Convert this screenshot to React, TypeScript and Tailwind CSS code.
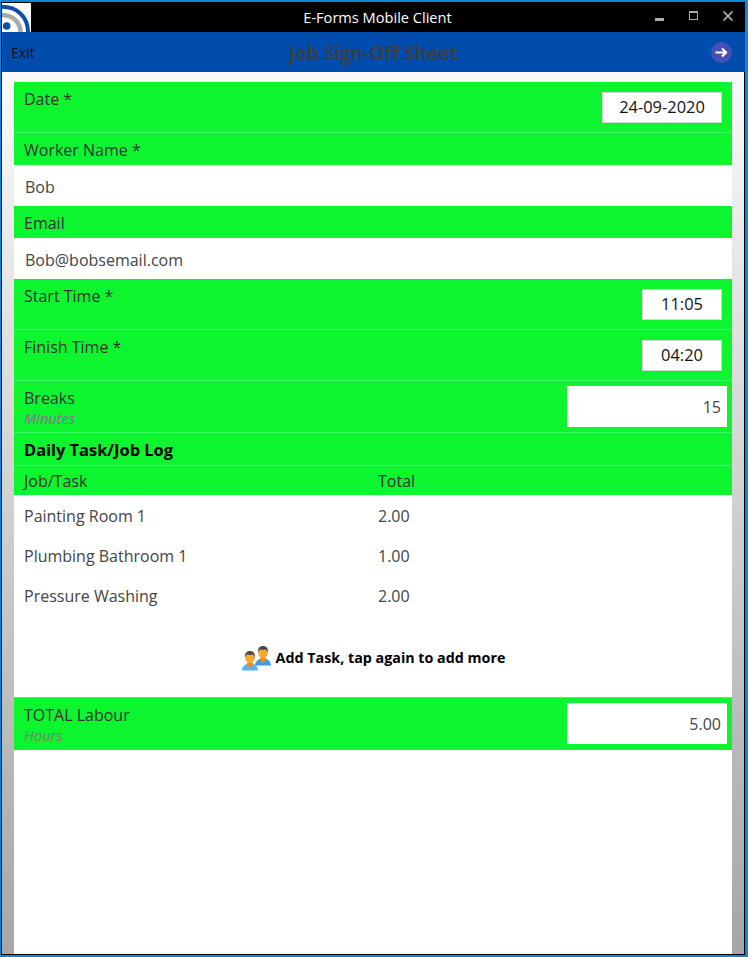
import { ReactNode } from "react";

const font = "font-['Open_Sans','Noto_Sans',sans-serif]";

function Divider() {
  return <div className="h-px bg-[#3ef766]" />;
}

function TimeRow({ label, value, boxWidth }: { label: string; value: string; boxWidth: string }) {
  return (
    <div className="flex h-[50px] justify-between bg-[#0cf52f] px-[10px]">
      <span className="pt-[5px] text-[16px] leading-[24px] text-[#333]">{label}</span>
      <div
        className={`mt-[10px] flex h-[31px] items-center justify-center border border-[#d5d5d5] bg-white text-[16.4px] text-[#111] ${boxWidth}`}
      >
        {value}
      </div>
    </div>
  );
}

function LabelRow({ children }: { children: ReactNode }) {
  return (
    <div className="flex h-[32px] items-center bg-[#0cf52f] pl-[10px] pt-[2px] text-[16px] text-[#333]">{children}</div>
  );
}

function InputRow({ value }: { value: string }) {
  return <div className="flex h-[41px] items-center bg-white pl-[11px] pt-[2px] text-[16px] text-[#444]">{value}</div>;
}

function NumberRow({
  label,
  hint,
  value,
  hintColor,
  height,
}: {
  label: string;
  hint: string;
  value: string;
  hintColor: string;
  height: string;
}) {
  return (
    <div className={`flex justify-between bg-[#0cf52f] pl-[10px] pr-[5px] ${height}`}>
      <div className="flex flex-col pt-[5px]">
        <span className="text-[16px] leading-[24px] text-[#333]">{label}</span>
        <span className={`text-[14.6px] italic leading-[16px] ${hintColor}`}>{hint}</span>
      </div>
      <div className="mt-[5px] flex h-[41px] w-[160px] items-center justify-end bg-white pr-[6px] text-[16px] text-[#444]">
        {value}
      </div>
    </div>
  );
}

function TaskRow({ name, total }: { name: string; total: string }) {
  return (
    <div className="flex h-[40px] items-center pl-[10px] pt-[2px] text-[16px] text-[#444]">
      <span className="w-[354px]">{name}</span>
      <span>{total}</span>
    </div>
  );
}

function Person({ x, y, body }: { x: number; y: number; body: string }) {
  return (
    <g transform={`translate(${x} ${y})`}>
      <path d="M0 19.500c0-3.500 2.500-6 6-7h4c3.500 1 6 3.500 6 7z" fill={body} />
      <path d="M4.500 12h7l-1.500 3.500-2 1.500-2-1.500z" fill="#f08c1a" />
      <ellipse cx="8" cy="6.800" rx="4.700" ry="5.500" fill="#f8a82c" />
      <path d="M3 6.500C2.500 2 5 0 8 0s5.500 2 5 6.500c-.8-1.500-1.300-2.700-2-3-2 .6-4 .6-6 0-.7.3-1.200 1.500-2 3z" fill="#4a4a4a" />
    </g>
  );
}

function PeopleIcon() {
  return (
    <svg width="29" height="25" viewBox="0 0 29 25" className="ml-px">
      <Person x={13} y={0} body="#3f9be8" />
      <Person x={0} y={5} body="#55b4f7" />
    </svg>
  );
}

function LogoIcon() {
  return (
    <svg width="29" height="29" viewBox="0 0 29 29" className="shrink-0 bg-white">
      <path d="M0 3.800c15 0 26 10 26 25.200" fill="none" stroke="#0f4fa8" strokeWidth="4" />
      <path d="M0 12c10 0 18.500 7 18.500 17" fill="none" stroke="#a9a9a9" strokeWidth="4.500" />
      <circle cx="4.700" cy="23" r="3.800" fill="#0f4fa8" />
    </svg>
  );
}

export default function App() {
  return (
    <div
      className={`h-[957px] w-[748px] overflow-hidden border-t-2 border-r-[3px] border-b-2 border-l border-[#0a86dc] ${font}`}
    >
      <div className="flex h-full flex-col border-l border-black">
        <div className="relative flex h-[30px] shrink-0 items-end bg-black">
          <LogoIcon />
          <span className="absolute left-[8px] right-0 top-[5px] text-center text-[14.6px] leading-[20px] text-white">
            E-Forms Mobile Client
          </span>
          <div className="ml-auto flex h-full items-center">
            <div className="mr-[25px] mt-[5px] h-[3px] w-[9px] bg-[#aaa]" />
            <div className="mr-[25px] mt-[-3px] h-[9px] w-[9px] border border-t-2 border-[#aaa]" />
            <svg width="10" height="10" viewBox="0 0 10 10" className="mr-[12px] mt-[-3px]">
              <path d="M0.5 0.5l9 9M9.500 0.5l-9 9" stroke="#aaa" strokeWidth="1.800" />
            </svg>
          </div>
        </div>
        <div className="relative flex h-[40px] shrink-0 items-center bg-[#004cad] pl-[9px]">
          <span className="text-[14px] text-[#111]">Exit</span>
          <span className="absolute left-0 right-0 pt-[2px] text-center text-[19px] font-bold text-[#3a3f48]">
            Job Sign-Off Sheet
          </span>
          <div className="ml-auto mr-[13px] flex h-[21px] w-[21px] items-center justify-center rounded-full bg-[#4450b8]">
            <svg width="13" height="11" viewBox="0 0 13 11">
              <path d="M0.500 5.500h10M7 1.500l4 4-4 4" fill="none" stroke="#fff" strokeWidth="2.200" />
            </svg>
          </div>
        </div>
        <div className="flex min-h-0 flex-1 border-r border-b border-black bg-gradient-to-b from-[#fafafa] to-[#a6a6a6] px-[12px] pt-[10px]">
          <div className="flex w-full flex-col bg-white">
            <TimeRow label="Date *" value="24-09-2020" boxWidth="w-[120px]" />
            <Divider />
            <LabelRow>Worker Name *</LabelRow>
            <InputRow value="Bob" />
            <LabelRow>Email</LabelRow>
            <InputRow value="Bob@bobsemail.com" />
            <TimeRow label="Start Time *" value="11:05" boxWidth="w-[80px]" />
            <Divider />
            <TimeRow label="Finish Time *" value="04:20" boxWidth="w-[80px]" />
            <Divider />
            <NumberRow label="Breaks" hint="Minutes" value="15" hintColor="text-[#8a6f9a]" height="h-[51px]" />
            <Divider />
            <div className="flex h-[32px] items-center bg-[#0cf52f] pl-[10px] pt-[2px] text-[16.4px] font-bold text-black">
              Daily Task/Job Log
            </div>
            <Divider />
            <div className="flex h-[29px] items-center bg-[#0cf52f] pl-[10px] text-[16px] text-[#333]">
              <span className="w-[354px]">Job/Task</span>
              <span>Total</span>
            </div>
            <TaskRow name="Painting Room 1" total="2.00" />
            <TaskRow name="Plumbing Bathroom 1" total="1.00" />
            <TaskRow name="Pressure Washing" total="2.00" />
            <div className="flex h-[82px] items-center justify-center gap-[5px] pt-[4px] text-[14.3px] font-bold text-black">
              <PeopleIcon />
              <span>Add Task, tap again to add more</span>
            </div>
            <Divider />
            <NumberRow label="TOTAL Labour" hint="Hours" value="5.00" hintColor="text-[#6f8a70]" height="h-[52px]" />
          </div>
        </div>
      </div>
    </div>
  );
}
